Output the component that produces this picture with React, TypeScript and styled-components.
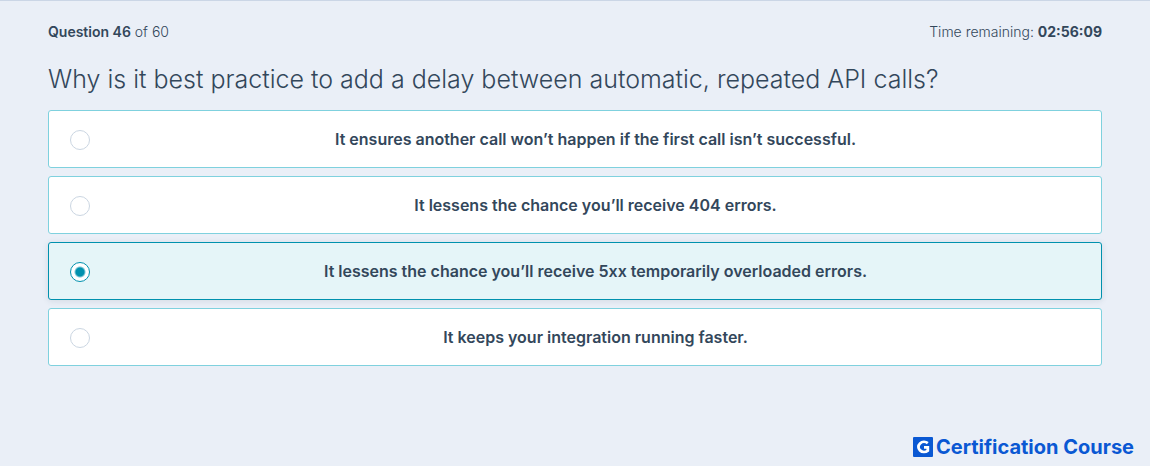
import React, { useState } from "react";
import styled, { createGlobalStyle } from "styled-components";

const GlobalStyle = createGlobalStyle`
  * { box-sizing: border-box; }
  body {
    margin: 0;
    background: #eaeff7;
    color: #33475b;
    font-family: Inter, "Liberation Sans", sans-serif;
    font-size: 14px;
    line-height: 24px;
    font-weight: 300;
  }
`;

const Page = styled.div`
  display: flex;
  flex-direction: column;
  min-height: 100vh;
  border-top: 1px solid #cbd6e6;
`;

const Main = styled.main`
  flex: 1;
  padding: 19px 48px;
`;

const StatusBar = styled.header`
  display: flex;
  justify-content: space-between;
`;

const Status = styled.p`
  margin: 0;
`;

const Strong = styled.strong<{ $weight: number }>`
  font-weight: ${(p) => p.$weight};
`;

const Quiz = styled.fieldset`
  min-width: 0;
  margin: 0;
  padding: 0;
  border: 0;
`;

const QuestionText = styled.legend`
  padding: 20px 0 15px;
  font-size: 25px;
  line-height: 31px;
`;

const Options = styled.div`
  display: grid;
  gap: 8px;
`;

const Option = styled.label<{ $selected: boolean }>`
  display: flex;
  align-items: center;
  min-height: 58px;
  padding-left: 21px;
  border: 1px solid ${(p) => (p.$selected ? "#0091ae" : "#7fd1de")};
  border-radius: 3px;
  background: ${(p) => (p.$selected ? "#e5f5f8" : "#fff")};
  box-shadow: ${(p) => (p.$selected ? "0 1px 6px rgba(45, 62, 80, 0.12)" : "none")};
  cursor: pointer;
`;

const Radio = styled.input`
  appearance: none;
  flex: none;
  width: 20px;
  height: 20px;
  margin: 2px 0 0;
  border: 1px solid #cbd6e2;
  border-radius: 50%;
  background: #fff;

  &:checked {
    border-color: #0091ae;
    background: radial-gradient(circle, #0091ae 4px, #fff 6px);
  }
`;

const OptionText = styled.span`
  flex: 1;
  text-align: center;
  font-size: 16px;
  font-weight: 600;
`;

const Footer = styled.footer`
  display: flex;
  justify-content: flex-end;
  align-items: center;
  gap: 3px;
  padding: 0 16px 7px;
`;

const Mark = styled.svg`
  width: 20px;
  height: 20px;
`;

const Brand = styled.span`
  color: #0a58d3;
  font-size: 20px;
  font-weight: 700;
`;

const answers = [
  "It ensures another call won’t happen if the first call isn’t successful.",
  "It lessens the chance you’ll receive 404 errors.",
  "It lessens the chance you’ll receive 5xx temporarily overloaded errors.",
  "It keeps your integration running faster.",
];

export default function App() {
  const [selected, setSelected] = useState(2);
  return (
    <Page>
      <GlobalStyle />
      <Main>
        <StatusBar>
          <Status><Strong $weight={600}>Question 46</Strong> of 60</Status>
          <Status>Time remaining: <Strong $weight={700}>02:56:09</Strong></Status>
        </StatusBar>
        <Quiz>
          <QuestionText>
            Why is it best practice to add a delay between automatic, repeated API calls?
          </QuestionText>
          <Options>
            {answers.map((answer, i) => (
              <Option key={answer} $selected={selected === i}>
                <Radio type="radio" name="answer" checked={selected === i} onChange={() => setSelected(i)} />
                <OptionText>{answer}</OptionText>
              </Option>
            ))}
          </Options>
        </Quiz>
      </Main>
      <Footer>
        <Mark viewBox="0 0 20 20" aria-hidden="true">
          <rect width="20" height="20" rx="1" fill="#0a58d3" />
          <path d="M14.8 6.2A5.6 5 0 1 0 14.8 13.6V10.4H11" fill="none" stroke="#fff" strokeWidth="2.8" />
        </Mark>
        <Brand>Certification Course</Brand>
      </Footer>
    </Page>
  );
}
